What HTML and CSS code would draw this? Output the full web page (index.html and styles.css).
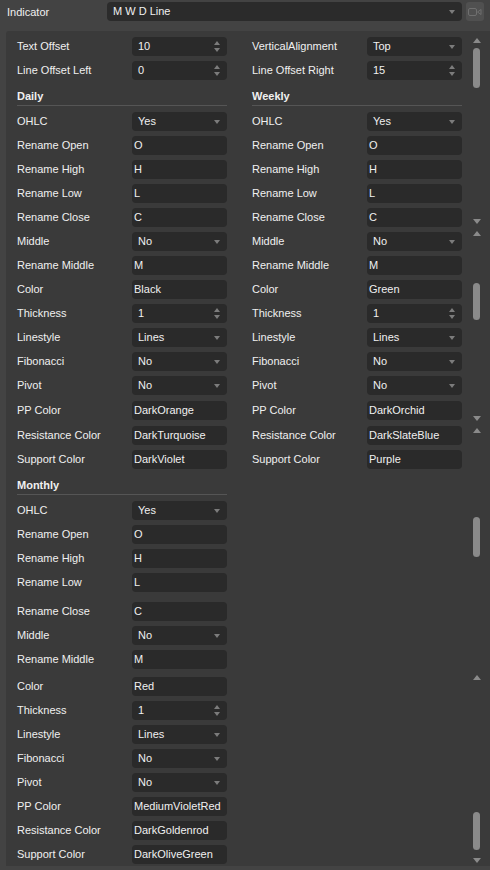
FILE: index.html
```html
<!DOCTYPE html>
<html lang="en">
<head>
    <meta charset="UTF-8">
    <title>Indicator - M W D Line</title>
    <link rel="stylesheet" href="styles.css">
</head>
<body>

<div class="topbar">
    <div class="top-label">Indicator</div>
    <div class="top-field dd">M W D Line</div>
    <div class="top-btn">
        <svg width="14" height="10" viewBox="0 0 14 10">
            <rect x="0.5" y="1.5" width="8" height="7" rx="1.5" fill="none" stroke="#6f6f6f" stroke-width="1"/>
            <path d="M9.5 5 L13 2.5 L13 7.5 Z" fill="none" stroke="#6f6f6f" stroke-width="1"/>
        </svg>
    </div>
</div>

<div class="panel">
    <div class="cols">
        <div class="col">
            <div class="row"><span class="label">Text Offset</span><span class="field spin">10</span></div>
            <div class="row"><span class="label">Line Offset Left</span><span class="field spin">0</span></div>
        </div>
        <div class="col">
            <div class="row"><span class="label">VerticalAlignment</span><span class="field dd">Top</span></div>
            <div class="row"><span class="label">Line Offset Right</span><span class="field spin">15</span></div>
        </div>
    </div>

    <div class="cols">
        <div class="col">
            <div class="sec"><div class="sec-title">Daily</div></div>
            <div class="row"><span class="label">OHLC</span><span class="field dd">Yes</span></div>
            <div class="row"><span class="label">Rename Open</span><span class="field">O</span></div>
            <div class="row"><span class="label">Rename High</span><span class="field">H</span></div>
            <div class="row"><span class="label">Rename Low</span><span class="field">L</span></div>
            <div class="row"><span class="label">Rename Close</span><span class="field">C</span></div>
            <div class="row"><span class="label">Middle</span><span class="field dd">No</span></div>
            <div class="row"><span class="label">Rename Middle</span><span class="field">M</span></div>
            <div class="row"><span class="label">Color</span><span class="field">Black</span></div>
            <div class="row"><span class="label">Thickness</span><span class="field spin">1</span></div>
            <div class="row"><span class="label">Linestyle</span><span class="field dd">Lines</span></div>
            <div class="row"><span class="label">Fibonacci</span><span class="field dd">No</span></div>
            <div class="row"><span class="label">Pivot</span><span class="field dd">No</span></div>
            <div class="row nudge1"><span class="label">PP Color</span><span class="field">DarkOrange</span></div>
            <div class="row nudge1"><span class="label">Resistance Color</span><span class="field">DarkTurquoise</span></div>
            <div class="row"><span class="label">Support Color</span><span class="field">DarkViolet</span></div>
        </div>
        <div class="col">
            <div class="sec"><div class="sec-title">Weekly</div></div>
            <div class="row"><span class="label">OHLC</span><span class="field dd">Yes</span></div>
            <div class="row"><span class="label">Rename Open</span><span class="field">O</span></div>
            <div class="row"><span class="label">Rename High</span><span class="field">H</span></div>
            <div class="row"><span class="label">Rename Low</span><span class="field">L</span></div>
            <div class="row"><span class="label">Rename Close</span><span class="field">C</span></div>
            <div class="row"><span class="label">Middle</span><span class="field dd">No</span></div>
            <div class="row"><span class="label">Rename Middle</span><span class="field">M</span></div>
            <div class="row"><span class="label">Color</span><span class="field">Green</span></div>
            <div class="row"><span class="label">Thickness</span><span class="field spin">1</span></div>
            <div class="row"><span class="label">Linestyle</span><span class="field dd">Lines</span></div>
            <div class="row"><span class="label">Fibonacci</span><span class="field dd">No</span></div>
            <div class="row"><span class="label">Pivot</span><span class="field dd">No</span></div>
            <div class="row nudge1"><span class="label">PP Color</span><span class="field">DarkOrchid</span></div>
            <div class="row nudge1"><span class="label">Resistance Color</span><span class="field">DarkSlateBlue</span></div>
            <div class="row"><span class="label">Support Color</span><span class="field">Purple</span></div>
        </div>
    </div>

    <div class="col">
        <div class="sec"><div class="sec-title">Monthly</div></div>
        <div class="row"><span class="label">OHLC</span><span class="field dd">Yes</span></div>
        <div class="row"><span class="label">Rename Open</span><span class="field">O</span></div>
        <div class="row"><span class="label">Rename High</span><span class="field">H</span></div>
        <div class="row"><span class="label">Rename Low</span><span class="field">L</span></div>
        <div class="row nudge5"><span class="label">Rename Close</span><span class="field">C</span></div>
        <div class="row"><span class="label">Middle</span><span class="field dd">No</span></div>
        <div class="row"><span class="label">Rename Middle</span><span class="field">M</span></div>
        <div class="row nudge3"><span class="label">Color</span><span class="field">Red</span></div>
        <div class="row"><span class="label">Thickness</span><span class="field spin">1</span></div>
        <div class="row"><span class="label">Linestyle</span><span class="field dd">Lines</span></div>
        <div class="row"><span class="label">Fibonacci</span><span class="field dd">No</span></div>
        <div class="row"><span class="label">Pivot</span><span class="field dd">No</span></div>
        <div class="row"><span class="label">PP Color</span><span class="field">MediumVioletRed</span></div>
        <div class="row"><span class="label">Resistance Color</span><span class="field">DarkGoldenrod</span></div>
        <div class="row"><span class="label">Support Color</span><span class="field">DarkOliveGreen</span></div>
    </div>

    <!-- scrollbar pieces sit over the panel's right edge -->
    <div class="scrollbar">
        <i class="arrow up" style="top: 7px"></i>
        <i class="thumb" style="top: 17px; height: 40px"></i>
        <i class="arrow down" style="top: 188px"></i>
        <i class="arrow up" style="top: 200px"></i>
        <i class="thumb" style="top: 252px; height: 37px"></i>
        <i class="arrow down" style="top: 385px"></i>
        <i class="arrow up" style="top: 397px"></i>
        <i class="thumb" style="top: 486px; height: 40px"></i>
        <i class="arrow up" style="top: 644px"></i>
        <i class="thumb" style="top: 781px; height: 38px"></i>
        <i class="arrow down" style="top: 827px"></i>
    </div>
</div>

</body>
</html>
```

FILE: styles.css
```css
body {
    margin: 0;
    width: 490px;
    height: 870px;
    overflow: hidden;
    background-color: #434343;
    font-family: "Liberation Sans", Arial, sans-serif;
    font-size: 11px;
    color: #f0f0f0;
}

/* top bar */
.topbar {
    display: flex;
    align-items: center;
    padding: 2px 0 0 7px;
    height: 19px;
}

.top-label {
    width: 100px;
}

.top-field {
    position: relative;
    box-sizing: border-box;
    width: 355px;
    height: 19px;
    line-height: 19px;
    padding-left: 6px;
    background-color: #2b2b2b;
    border-radius: 4px;
}

.top-btn {
    display: flex;
    align-items: center;
    justify-content: center;
    margin-left: 4px;
    width: 18px;
    height: 19px;
    background-color: #505050;
    border-radius: 3px;
}

/* settings panel */
.panel {
    position: relative;
    margin: 10px 0 0 6px;
    padding: 3px 0 0 11px;
    height: 832px;
    background-color: #3a3a3a;
    border-top-left-radius: 3px;
}

.cols {
    display: flex;
}

.col {
    width: 235px;
}

.row {
    display: flex;
    align-items: center;
    height: 24px;
}

.nudge1 { margin-top: 1px; }
.nudge3 { margin-top: 3px; }
.nudge5 { margin-top: 5px; }

.label {
    width: 115px;
    white-space: nowrap;
}

.field {
    position: relative;
    box-sizing: border-box;
    width: 95px;
    height: 19px;
    line-height: 19px;
    padding-left: 2px;
    background-color: #2a2a2a;
    border-radius: 4px;
    white-space: nowrap;
}

.field.dd,
.field.spin {
    padding-left: 6px;
}

/* dropdown arrow */
.dd::after {
    content: '';
    position: absolute;
    right: 7px;
    top: 8px;
    border-left: 3px solid transparent;
    border-right: 3px solid transparent;
    border-top: 4px solid #7c7c7c;
}

/* spinner arrows */
.spin::before,
.spin::after {
    content: '';
    position: absolute;
    right: 7px;
    border-left: 3px solid transparent;
    border-right: 3px solid transparent;
}

.spin::before {
    top: 4px;
    border-bottom: 4px solid #7c7c7c;
}

.spin::after {
    top: 11px;
    border-top: 4px solid #7c7c7c;
}

/* section headings */
.sec {
    height: 27px;
}

.sec-title {
    width: 210px;
    padding-top: 7px;
    height: 16px;
    line-height: 14px;
    font-weight: bold;
    border-bottom: 1px solid #555555;
}

/* scrollbar */
.scrollbar {
    position: absolute;
    top: 0;
    left: 467px;
    width: 8px;
    height: 100%;
}

.scrollbar i {
    position: absolute;
    display: block;
}

.thumb {
    left: 0;
    width: 7px;
    background-color: #8a8a8a;
    border-radius: 4px;
}

.arrow {
    left: 0;
    width: 0;
    height: 0;
    border-left: 4px solid transparent;
    border-right: 4px solid transparent;
}

.arrow.up {
    border-bottom: 5px solid #8a8a8a;
}

.arrow.down {
    border-top: 5px solid #8a8a8a;
}
```
